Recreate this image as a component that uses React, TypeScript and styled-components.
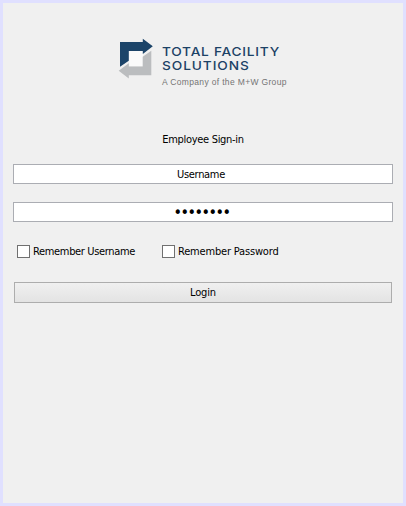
import React from "react";
import styled, { createGlobalStyle } from "styled-components";

const GlobalStyle = createGlobalStyle`
  * { box-sizing: border-box; }
  body { margin: 0; background: #e0e0ff; }
`;

const Window = styled.main`
  width: 406px;
  height: 506px;
  border: 3px solid #e0e0ff;
  background: #f0f0f0;
  font: 11px/14px "DejaVu Sans Condensed", "DejaVu Sans", Tahoma, sans-serif;
  font-stretch: condensed;
  letter-spacing: -0.3px;
  color: #000;
  overflow: hidden;
`;

const Brand = styled.header`
  display: flex;
  gap: 9px;
  height: 50px;
  margin: 35px 0 0 115px;
`;

const Mark = styled.svg`
  width: 35px;
  height: 42px;
  flex: none;
`;

const BrandText = styled.div`
  padding-top: 7px;
  white-space: nowrap;
`;

const BrandName = styled.div<{ $spacing: number }>`
  width: max-content;
  font: 550 12px/14px Inter, sans-serif;
  letter-spacing: ${(p) => p.$spacing}px;
  color: #1c4266;
  transform: scaleX(1.14);
  transform-origin: left;
`;

const Tagline = styled.div`
  margin-top: 4px;
  font: 8.5px/10px "Liberation Sans", Arial, sans-serif;
  letter-spacing: 0.34px;
  color: #747474;
`;

const Form = styled.form`
  display: flex;
  flex-direction: column;
  margin: 45px 10px 0;
`;

const Heading = styled.div`
  height: 14px;
  margin-bottom: 17px;
  text-align: center;
`;

const Field = styled.input`
  width: 380px;
  height: 20px;
  margin: 0 0 18px;
  padding: 0 4px 0 0;
  border: 1px solid #abadb3;
  border-radius: 0;
  outline: none;
  background: #fff;
  font: inherit;
  letter-spacing: inherit;
  color: #000;
  text-align: center;

  &[type="password"] {
    padding: 0 3px 0 0;
    font-size: 16px;
    letter-spacing: -1.5px;
  }
`;

const Options = styled.div`
  display: grid;
  grid-template-columns: 145px 1fr;
  margin: 5px 0 24px 4px;
`;

const Option = styled.label<{ $spacing: number }>`
  display: flex;
  align-items: center;
  gap: 3px;
  height: 13px;
  white-space: nowrap;
  letter-spacing: ${(p) => p.$spacing}px;
`;

const Checkbox = styled.input`
  appearance: none;
  width: 13px;
  height: 13px;
  margin: 0;
  border: 1px solid #707070;
  background: #fff;
`;

const LoginButton = styled.button`
  width: 378px;
  height: 21px;
  margin-left: 1px;
  padding: 0;
  border: 1px solid #adadad;
  background: linear-gradient(#f0f0f0, #e3e3e3);
  font: inherit;
  letter-spacing: -0.15px;
  color: #000;
`;

export default function App() {
  return (
    <>
      <GlobalStyle />
      <Window>
        <Brand>
          <Mark viewBox="118 38 35 42">
            <path d="M129 51H143V66H129Z" fill="#fafafa" />
            <path d="M120 42H142.8V38.7L152.8 46.2L142.8 54V51H128.8V60.8L120 66.8Z" fill="#1c4469" />
            <path d="M151.3 50.8V75.2H128.8V78.4L118.7 70.8L128.8 63.2V66.4H142.7V56.8Z" fill="#bbbdbf" />
          </Mark>
          <BrandText>
            <BrandName $spacing={0.67}>TOTAL FACILITY</BrandName>
            <BrandName $spacing={0.8}>SOLUTIONS</BrandName>
            <Tagline>A Company of the M+W Group</Tagline>
          </BrandText>
        </Brand>
        <Form onSubmit={(e) => e.preventDefault()}>
          <Heading>Employee Sign-in</Heading>
          <Field type="text" defaultValue="Username" aria-label="Username" />
          <Field type="password" defaultValue="password" aria-label="Password" />
          <Options>
            <Option $spacing={-0.34}><Checkbox type="checkbox" />Remember Username</Option>
            <Option $spacing={-0.18}><Checkbox type="checkbox" />Remember Password</Option>
          </Options>
          <LoginButton type="submit">Login</LoginButton>
        </Form>
      </Window>
    </>
  );
}
